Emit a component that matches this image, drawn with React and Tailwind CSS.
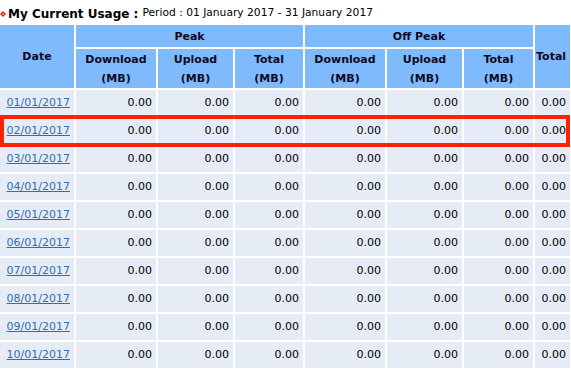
const DAYS = Array.from({ length: 10 }, (_, i) => `${String(i + 1).padStart(2, "0")}/01/2017`);

function Bullet() {
  return (
    <svg width="6" height="8" viewBox="0 0 6 8" className="inline-block mr-[2px]">
      <path d="M0 4 L3 1 L6 4 L3 7 Z" fill="#e8231b" />
      <path d="M2 4 L3 3 L4 4 L3 5 Z" fill="#ffd0cc" />
    </svg>
  );
}

export default function App() {
  const th = "bg-[#7fbafc] text-[#0b0b24] font-bold text-[11px] leading-[19px] text-center align-middle p-0";
  const td = "bg-[#e6ecf6] text-black text-[11px] text-right pr-[4px] h-[26px] align-middle";

  return (
    <div className="relative w-[571px] h-[371px] overflow-hidden bg-white font-['DejaVu_Sans',Verdana,sans-serif]">
      <div className="h-[23px] flex items-center text-black whitespace-nowrap pt-[4px]">
        <Bullet />
        <span className="font-bold text-[12px]">My Current Usage :</span>
        <span className="ml-[4px] text-[10.7px]">Period : 01 January 2017 - 31 January 2017</span>
      </div>

      <table className="table-fixed border-separate border-spacing-[2px] -ml-[2px] w-[574px]">
        <colgroup>
          <col className="w-[74px]" />
          <col className="w-[80px]" />
          <col className="w-[75px]" />
          <col className="w-[68px]" />
          <col className="w-[80px]" />
          <col className="w-[75px]" />
          <col className="w-[69px]" />
          <col className="w-[35px]" />
        </colgroup>
        <thead>
          <tr className="h-[22px]">
            <th rowSpan={2} className={th}>Date</th>
            <th colSpan={3} className={th}>Peak</th>
            <th colSpan={3} className={th}>Off Peak</th>
            <th rowSpan={2} className={th + " pl-[1px] text-left"}>Total</th>
          </tr>
          <tr className="h-[39px]">
            <th className={th}>Download<br />(MB)</th>
            <th className={th}>Upload<br />(MB)</th>
            <th className={th}>Total<br />(MB)</th>
            <th className={th}>Download<br />(MB)</th>
            <th className={th}>Upload<br />(MB)</th>
            <th className={th}>Total<br />(MB)</th>
          </tr>
        </thead>
        <tbody>
          {DAYS.map((d) => (
            <tr key={d}>
              <td className={td + " text-left pl-[2px]"}>
                <a href="#" className="text-[#2d6fb6] underline">{d}</a>
              </td>
              {Array.from({ length: 7 }).map((_, i) => (
                <td key={i} className={td + (i === 6 ? " pr-[3px]" : "")}>0.00</td>
              ))}
            </tr>
          ))}
        </tbody>
      </table>

      <div className="absolute left-0 top-[115px] w-[570px] h-[32px] border-[4px] border-[#ff2200]" />
    </div>
  );
}
